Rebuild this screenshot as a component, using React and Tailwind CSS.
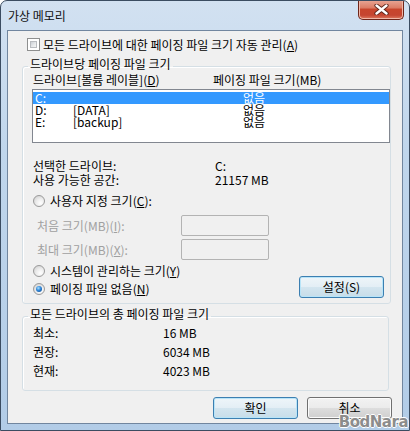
import React from "react";

const drives = [
  { letter: "C:", label: "", size: "없음", selected: true },
  { letter: "D:", label: "[DATA]", size: "없음" },
  { letter: "E:", label: "[backup]", size: "없음" },
];

function Checkbox() {
  return (
    <span className="w-[13px] h-[13px] shrink-0 border border-[#8e8f8f] bg-white p-[2px]">
      <span className="block w-full h-full border border-[#b9bcc0] bg-[linear-gradient(135deg,#cbcfd5_0%,#e8eaec_60%,#f4f4f4_100%)]" />
    </span>
  );
}

function Radio({ checked }) {
  return (
    <span className="w-[12px] h-[12px] shrink-0 rounded-full border border-[#9a9a9a] bg-[radial-gradient(circle_at_65%_70%,#ffffff_0%,#ececec_45%,#c9c9c9_100%)] flex items-center justify-center">
      {checked && (
        <span className="w-[6px] h-[6px] rounded-full bg-[radial-gradient(circle_at_40%_35%,#a8e0ff_0%,#2f86d8_45%,#0b3f80_100%)]" />
      )}
    </span>
  );
}

function WinButton({ children, focused }) {
  return (
    <button
      className={
        focused
          ? "w-[85px] h-[22px] rounded-[3px] border border-[#3c7fb1] bg-[linear-gradient(to_bottom,#eef5f9_0%,#e3eef5_50%,#d3e5ef_51%,#c7dde9_100%)] shadow-[inset_0_0_0_1px_#b8e4f8] text-[12px] leading-[12px] text-black"
          : "w-[85px] h-[22px] rounded-[3px] border border-[#707070] bg-[linear-gradient(to_bottom,#f2f2f2_0%,#ebebeb_50%,#dddddd_51%,#cfcfcf_100%)] shadow-[inset_0_0_0_1px_#fbfbfb] text-[12px] leading-[12px] text-black"
      }
    >
      {children}
    </button>
  );
}

function U({ children }) {
  return <span className="underline underline-offset-[1px]">{children}</span>;
}

export default function App() {
  return (
    <div className="w-[410px] h-[431px] relative rounded-t-[7px] border border-[#3b4c61] bg-[linear-gradient(to_bottom,#d2e1f1_0%,#c0d6ec_35%,#b2cce7_100%)] flex flex-col px-[6px] pb-[6px] font-['Noto_Sans_CJK_KR','Noto_Sans',sans-serif] text-[12px] leading-[12px] text-black overflow-hidden">
      {/* title bar */}
      <div className="h-[29px] pt-[9px] pl-[1px] shrink-0 text-[#111]">가상 메모리</div>
      <div className="absolute top-[-1px] right-[5px] w-[46px] h-[20px] rounded-b-[5px] border border-t-0 border-[#6e2519] bg-[linear-gradient(to_bottom,#e9a897_0%,#dc7d66_40%,#c8452c_50%,#c54530_80%,#de7a60_100%)] shadow-[inset_0_0_0_1px_#f0b7a8] flex items-center justify-center">
        <svg width="15" height="11" viewBox="0 0 15 11">
          <path d="M2.5 1.5 L12.5 9.5 M12.5 1.5 L2.5 9.5" stroke="#5a2218" strokeWidth="4.2" strokeLinecap="round" />
          <path d="M2.5 1.5 L12.5 9.5 M12.5 1.5 L2.5 9.5" stroke="#ffffff" strokeWidth="2.4" strokeLinecap="round" />
        </svg>
      </div>

      {/* client area */}
      <div className="flex-1 border border-[#71869f] bg-[#f0f0f0] flex flex-col">
        <div className="mt-[7px] ml-[19px] h-[13px] flex items-center gap-[3px]">
          <Checkbox />
          <span>
            모든 드라이브에 대한 페이징 파일 크기 자동 관리(<U>A</U>)
          </span>
        </div>

        <fieldset className="mt-[7px] ml-[14px] w-[367px] border border-[#d5dfe5] rounded-[3px] shadow-[inset_1px_1px_0_#ffffff] pb-[5px]">
          <legend className="ml-[5px] px-[2px] pb-[5px]">드라이브당 페이징 파일 크기</legend>
          <div className="-mt-[1px] h-[12px] flex pl-[10px]">
            <span className="w-[180px]">
              드라이브[볼륨 레이블](<U>D</U>)
            </span>
            <span>페이징 파일 크기(MB)</span>
          </div>
          <div className="mt-[3px] ml-[9px] w-[358px] h-[54px] border border-[#828790] bg-white pt-[2px]">
            {drives.map((d) => (
              <div
                key={d.letter}
                className={
                  d.selected
                    ? "h-[12px] flex pl-[2px] bg-[#3399ff] text-white"
                    : "h-[12px] flex pl-[2px] text-black"
                }
              >
                <span className="w-[38px]">{d.letter}</span>
                <span className="w-[170px]">{d.label}</span>
                <span>{d.size}</span>
              </div>
            ))}
          </div>

          <div className="mt-[17px] h-[12px] flex pl-[10px]">
            <span className="w-[182px]">선택한 드라이브:</span>
            <span>C:</span>
          </div>
          <div className="mt-[2px] h-[12px] flex pl-[10px]">
            <span className="w-[182px]">사용 가능한 공간:</span>
            <span>21157 MB</span>
          </div>

          <div className="mt-[9px] h-[12px] flex items-center gap-[5px] pl-[10px]">
            <Radio />
            <span>
              사용자 지정 크기(<U>C</U>):
            </span>
          </div>
          <div className="mt-[8px] h-[21px] flex items-center pl-[14px] text-[#a0a0a0]">
            <span className="w-[144px]">
              처음 크기(MB)(<U>I</U>):
            </span>
            <span className="w-[88px] h-[21px] border border-[#b3b3b3] rounded-[2px]" />
          </div>
          <div className="mt-[3px] h-[21px] flex items-center pl-[14px] text-[#a0a0a0]">
            <span className="w-[144px]">
              최대 크기(MB)(<U>X</U>):
            </span>
            <span className="w-[88px] h-[21px] border border-[#b3b3b3] rounded-[2px]" />
          </div>

          <div className="mt-[5px] flex items-start">
            <div className="flex flex-col gap-[6px] pl-[10px]">
              <div className="h-[12px] flex items-center gap-[5px]">
                <Radio />
                <span>
                  시스템이 관리하는 크기(<U>Y</U>)
                </span>
              </div>
              <div className="h-[12px] flex items-center gap-[5px]">
                <Radio checked />
                <span>
                  페이징 파일 없음(<U>N</U>)
                </span>
              </div>
            </div>
            <div className="ml-auto mr-[6px] mt-[11px]">
              <WinButton focused>설정(S)</WinButton>
            </div>
          </div>
        </fieldset>

        <fieldset className="mt-[4px] ml-[14px] w-[367px] border border-[#d5dfe5] rounded-[3px] shadow-[inset_1px_1px_0_#ffffff] pb-[13px]">
          <legend className="ml-[5px] px-[2px] pb-[5px]">모든 드라이브의 총 페이징 파일 크기</legend>
          <div className="mt-[2px] h-[12px] flex pl-[10px]">
            <span className="w-[130px]">최소:</span>
            <span>16 MB</span>
          </div>
          <div className="mt-[7px] h-[12px] flex pl-[10px]">
            <span className="w-[130px]">권장:</span>
            <span>6034 MB</span>
          </div>
          <div className="mt-[7px] h-[12px] flex pl-[10px]">
            <span className="w-[130px]">현재:</span>
            <span>4023 MB</span>
          </div>
        </fieldset>

        <div className="mt-[6px] mr-[10px] flex justify-end gap-[9px]">
          <WinButton focused>확인</WinButton>
          <WinButton>취소</WinButton>
        </div>
      </div>

      <div className="absolute right-[1px] bottom-[0px] font-['DejaVu_Sans',sans-serif] font-bold text-[15px] leading-[16px] tracking-[-0.5px] text-[#8c8c8c] [text-shadow:1px_0_#fff,-1px_0_#fff,0_1px_#fff,0_-1px_#fff]">
        BodNara
      </div>
    </div>
  );
}
